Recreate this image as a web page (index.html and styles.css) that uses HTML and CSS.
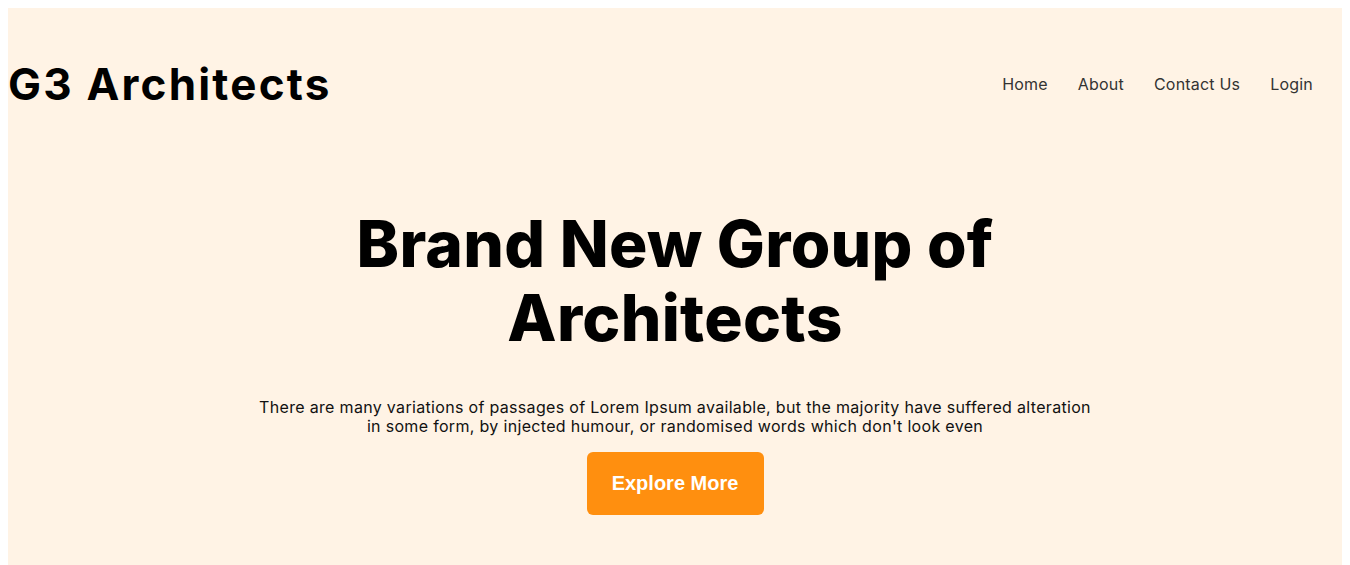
FILE: index.html
```html
<!DOCTYPE html>
<html lang="en">
<head>
<meta charset="utf-8">
<title>G3 Architects</title>
<link rel="stylesheet" href="styles.css">
</head>
<body>
<div class="page">
  <header class="header">
    <h1 class="logo">G3 Architects</h1>
    <nav class="nav">
      <a href="#">Home</a>
      <a href="#">About</a>
      <a href="#">Contact Us</a>
      <a href="#">Login</a>
    </nav>
  </header>
  <section class="hero">
    <h2 class="hero-title">Brand New Group of<br>Architects</h2>
    <p class="hero-text">There are many variations of passages of Lorem Ipsum available, but the majority have suffered alteration in some form, by injected humour, or randomised words which don't look even</p>
    <button class="btn">Explore More</button>
  </section>
</div>
</body>
</html>
```

FILE: styles.css
```css
body {
  margin: 8px;
  font-family: "Inter", "Noto Sans", sans-serif;
}
.page {
  background: #fff3e5;
  min-height: 600px;
}
.header {
  display: flex;
  justify-content: space-between;
  align-items: center;
  height: 152px;
  padding-right: 29px;
}
.logo {
  margin: 0;
  font-size: 44px;
  font-weight: 700;
  letter-spacing: 2.2px;
  color: #000;
}
.nav {
  display: flex;
  gap: 30px;
}
.nav a {
  color: #333;
  text-decoration: none;
  font-size: 16px;
  letter-spacing: 0.2px;
}
.hero {
  display: flex;
  flex-direction: column;
  align-items: center;
  text-align: center;
}
.hero-title {
  margin: 47px 0 0;
  font-size: 64px;
  line-height: 74px;
  font-weight: 800;
  letter-spacing: 0.3px;
  color: #000;
}
.hero-text {
  width: 845px;
  margin: 43px 0 16px;
  font-size: 16px;
  line-height: 19px;
  letter-spacing: 0.32px;
  color: #111;
}
.btn {
  width: 177px;
  height: 63px;
  border: none;
  border-radius: 6px;
  background: #ff8f0f;
  color: #fff;
  font-family: "Liberation Sans", Arial, sans-serif;
  font-size: 20px;
  font-weight: 700;
}
```
